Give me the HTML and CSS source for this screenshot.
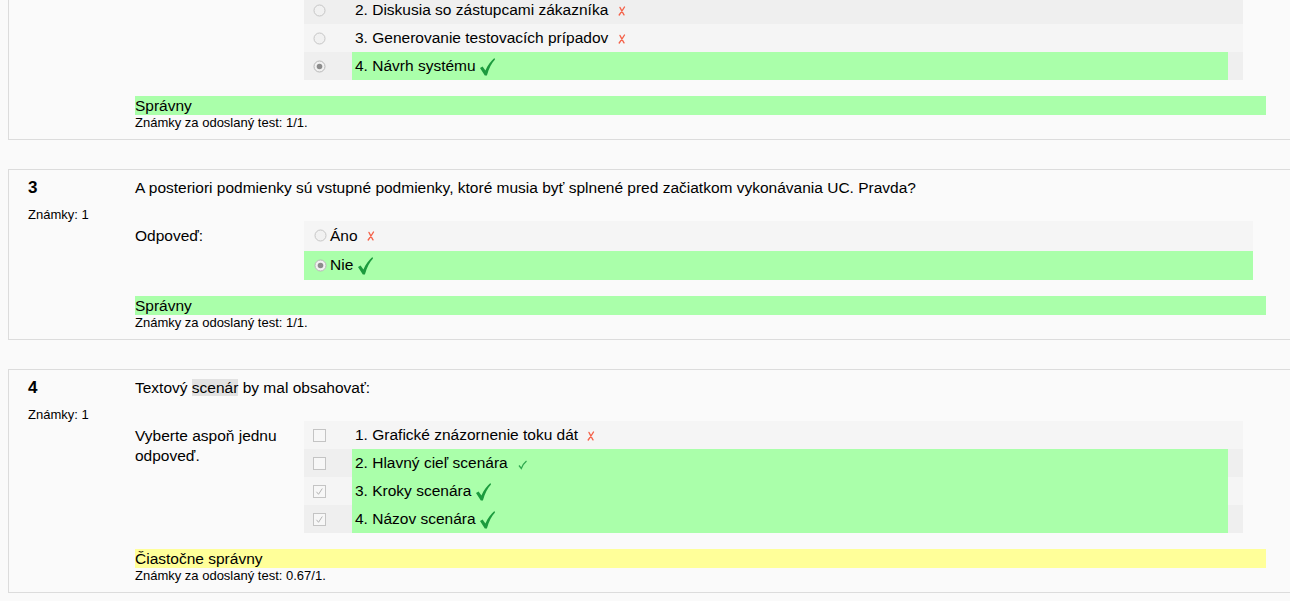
FILE: index.html
```html
<!DOCTYPE html>
<html lang="sk">
<head>
<meta charset="utf-8">
<title>Kvíz – prehľad</title>
<link rel="stylesheet" href="styles.css">
</head>
<body>

<div class="que cut">
  <div class="info"></div>
  <div class="content">
    <div class="ablock">
      <div class="prompt"></div>
      <div class="answer mc">
        <div class="row r0">
          <span class="ctl"><svg class="radio" width="13" height="13" viewBox="0 0 13 13"><circle cx="6.5" cy="6.5" r="5.5" fill="#f1f1f1" stroke="#c6c6c6"/></svg></span>
          <span class="lab"><span class="txt">2. Diskusia so zástupcami zákazníka <svg class="cross" width="8" height="10" viewBox="0 0 8 10"><path d="M2 1.5 C3 3.5 4.5 6.5 6 8.8 M6.5 1 C5 3.5 3 6.5 1.2 9" fill="none" stroke="#f4624a" stroke-width="1.4" stroke-linecap="round"/></svg></span></span>
        </div>
        <div class="row r1">
          <span class="ctl"><svg class="radio" width="13" height="13" viewBox="0 0 13 13"><circle cx="6.5" cy="6.5" r="5.5" fill="#f1f1f1" stroke="#c6c6c6"/></svg></span>
          <span class="lab"><span class="txt">3. Generovanie testovacích prípadov <svg class="cross" width="8" height="10" viewBox="0 0 8 10"><path d="M2 1.5 C3 3.5 4.5 6.5 6 8.8 M6.5 1 C5 3.5 3 6.5 1.2 9" fill="none" stroke="#f4624a" stroke-width="1.4" stroke-linecap="round"/></svg></span></span>
        </div>
        <div class="row r0">
          <span class="ctl"><svg class="radio" width="13" height="13" viewBox="0 0 13 13"><circle cx="6.5" cy="6.5" r="5.5" fill="#f1f1f1" stroke="#b8b8b8"/><circle cx="6.5" cy="6.5" r="2.8" fill="#8c8c8c"/></svg></span>
          <span class="lab"><span class="txt ok">4. Návrh systému <svg class="check" width="15" height="18" viewBox="0 0 15 18"><path d="M0 10 L2.6 8.4 L5.4 12.4 C7.9 7 11 3 14.4 0 L15 1.6 C11.6 5.2 9.1 10.2 6.9 17.5 L4.8 17.5 Z" fill="#1c9b3e"/></svg></span></span>
        </div>
      </div>
    </div>
    <div class="grading correct">Správny</div>
    <div class="details">Známky za odoslaný test: 1/1.</div>
  </div>
</div>

<div class="que">
  <div class="info">
    <div class="no">3</div>
    <div class="grade">Známky: 1</div>
  </div>
  <div class="content">
    <div class="qtext">A posteriori podmienky sú vstupné podmienky, ktoré musia byť splnené pred začiatkom vykonávania UC. Pravda?</div>
    <div class="ablock">
      <div class="prompt">Odpoveď:</div>
      <div class="answer tf">
        <div class="trow r1">
          <svg class="radio" width="13" height="13" viewBox="0 0 13 13"><circle cx="6.5" cy="6.5" r="5.5" fill="#f1f1f1" stroke="#c6c6c6"/></svg><span>Áno</span><svg class="cross" width="8" height="10" viewBox="0 0 8 10"><path d="M2 1.5 C3 3.5 4.5 6.5 6 8.8 M6.5 1 C5 3.5 3 6.5 1.2 9" fill="none" stroke="#f4624a" stroke-width="1.4" stroke-linecap="round"/></svg>
        </div>
        <div class="trow ok">
          <svg class="radio" width="13" height="13" viewBox="0 0 13 13"><circle cx="6.5" cy="6.5" r="5.5" fill="#f1f1f1" stroke="#b8b8b8"/><circle cx="6.5" cy="6.5" r="2.8" fill="#8c8c8c"/></svg><span>Nie</span><svg class="check" width="15" height="18" viewBox="0 0 15 18"><path d="M0 10 L2.6 8.4 L5.4 12.4 C7.9 7 11 3 14.4 0 L15 1.6 C11.6 5.2 9.1 10.2 6.9 17.5 L4.8 17.5 Z" fill="#1c9b3e"/></svg>
        </div>
      </div>
    </div>
    <div class="grading correct">Správny</div>
    <div class="details">Známky za odoslaný test: 1/1.</div>
  </div>
</div>

<div class="que">
  <div class="info">
    <div class="no">4</div>
    <div class="grade">Známky: 1</div>
  </div>
  <div class="content">
    <div class="qtext">Textový <span class="hl">scenár</span> by mal obsahovať:</div>
    <div class="ablock">
      <div class="prompt">Vyberte aspoň jednu odpoveď.</div>
      <div class="answer mc">
        <div class="row r1">
          <span class="ctl"><svg class="box" width="13" height="13" viewBox="0 0 13 13"><rect x="0.5" y="0.5" width="12" height="12" fill="#f7f7f7" stroke="#c4c4c4"/></svg></span>
          <span class="lab"><span class="txt">1. Grafické znázornenie toku dát <svg class="cross" width="8" height="10" viewBox="0 0 8 10"><path d="M2 1.5 C3 3.5 4.5 6.5 6 8.8 M6.5 1 C5 3.5 3 6.5 1.2 9" fill="none" stroke="#f4624a" stroke-width="1.4" stroke-linecap="round"/></svg></span></span>
        </div>
        <div class="row r0">
          <span class="ctl"><svg class="box" width="13" height="13" viewBox="0 0 13 13"><rect x="0.5" y="0.5" width="12" height="12" fill="#f7f7f7" stroke="#c4c4c4"/></svg></span>
          <span class="lab"><span class="txt ok">2. Hlavný cieľ scenára <svg class="scheck" width="9" height="10" viewBox="0 0 9 10"><path d="M1 5.5 L3.3 8.5 C4.5 5.5 6 3 8.5 1" fill="none" stroke="#2fa84f" stroke-width="1.3"/></svg></span></span>
        </div>
        <div class="row r1">
          <span class="ctl"><svg class="box" width="13" height="13" viewBox="0 0 13 13"><rect x="0.5" y="0.5" width="12" height="12" fill="#f7f7f7" stroke="#c4c4c4"/><path d="M3.5 6.8 L5.5 9.3 L9.3 3.5" fill="none" stroke="#b4b4b4" stroke-width="1"/></svg></span>
          <span class="lab"><span class="txt ok">3. Kroky scenára <svg class="check" width="15" height="18" viewBox="0 0 15 18"><path d="M0 10 L2.6 8.4 L5.4 12.4 C7.9 7 11 3 14.4 0 L15 1.6 C11.6 5.2 9.1 10.2 6.9 17.5 L4.8 17.5 Z" fill="#1c9b3e"/></svg></span></span>
        </div>
        <div class="row r0">
          <span class="ctl"><svg class="box" width="13" height="13" viewBox="0 0 13 13"><rect x="0.5" y="0.5" width="12" height="12" fill="#f7f7f7" stroke="#c4c4c4"/><path d="M3.5 6.8 L5.5 9.3 L9.3 3.5" fill="none" stroke="#b4b4b4" stroke-width="1"/></svg></span>
          <span class="lab"><span class="txt ok">4. Názov scenára <svg class="check" width="15" height="18" viewBox="0 0 15 18"><path d="M0 10 L2.6 8.4 L5.4 12.4 C7.9 7 11 3 14.4 0 L15 1.6 C11.6 5.2 9.1 10.2 6.9 17.5 L4.8 17.5 Z" fill="#1c9b3e"/></svg></span></span>
        </div>
      </div>
    </div>
    <div class="grading partial">Čiastočne správny</div>
    <div class="details">Známky za odoslaný test: 0.67/1.</div>
  </div>
</div>

</body>
</html>
```

FILE: styles.css
```css
html, body {
  margin: 0;
  padding: 0;
  overflow: hidden;
  background: #fafafa;
}

body {
  font-family: "Liberation Sans", Arial, sans-serif;
  font-size: 15.5px;
  color: #000;
}

.que {
  display: flex;
  margin: 29px -30px 0 8px;
  border: 1px solid #dcdcdc;
  background: #fafafa;
  padding: 8px 0 9px 0;
}

.que.cut {
  margin-top: -4px;
  border-top: none;
  padding-top: 0;
}

.info {
  flex: 0 0 126px;
  box-sizing: border-box;
  padding-left: 19px;
}

.no {
  font-weight: bold;
  font-size: 17px;
  line-height: 20px;
}

.grade {
  margin-top: 9px;
  font-size: 13px;
  line-height: 16px;
}

.content {
  flex: 0 0 1131px;
}

.qtext {
  line-height: 20px;
  margin-bottom: 23px;
}

.hl {
  background: #e2e2e2;
}

.ablock {
  display: flex;
}

.prompt {
  flex: 0 0 169px;
  box-sizing: border-box;
  padding-top: 5px;
  line-height: 20px;
}

.answer.mc {
  flex: 0 0 939px;
}

.answer.tf {
  flex: 0 0 949px;
}

.r0 { background: #efefef; }
.r1 { background: #f5f5f5; }

.row {
  display: flex;
  height: 28px;
}

.ctl {
  flex: 0 0 48px;
  box-sizing: border-box;
  padding-left: 9px;
  display: flex;
  align-items: center;
}

.lab {
  flex: 1;
  padding-right: 15px;
  display: flex;
}

.txt {
  flex: 1;
  padding-left: 3px;
  line-height: 28px;
  display: flex;
  align-items: center;
  white-space: pre;
}

.ok {
  background: #aaffaa;
}

.trow {
  display: flex;
  align-items: center;
  height: 29.5px;
  padding-left: 10px;
}

.trow .radio {
  margin-right: 3px;
}

.trow .cross {
  margin-left: 9px;
}

.trow .check {
  margin-left: 5px;
}

.cross {
  margin-left: 5px;
  margin-top: 1px;
}

.check {
  margin-left: 0;
  margin-top: 2px;
}

.scheck {
  margin-left: 6px;
  margin-top: 3px;
}

.grading {
  margin-top: 16px;
  height: 19px;
  line-height: 19px;
}

.grading.correct { background: #aaffaa; }
.grading.partial { background: #ffff99; }

.details {
  font-size: 13px;
  line-height: 15px;
}
```
